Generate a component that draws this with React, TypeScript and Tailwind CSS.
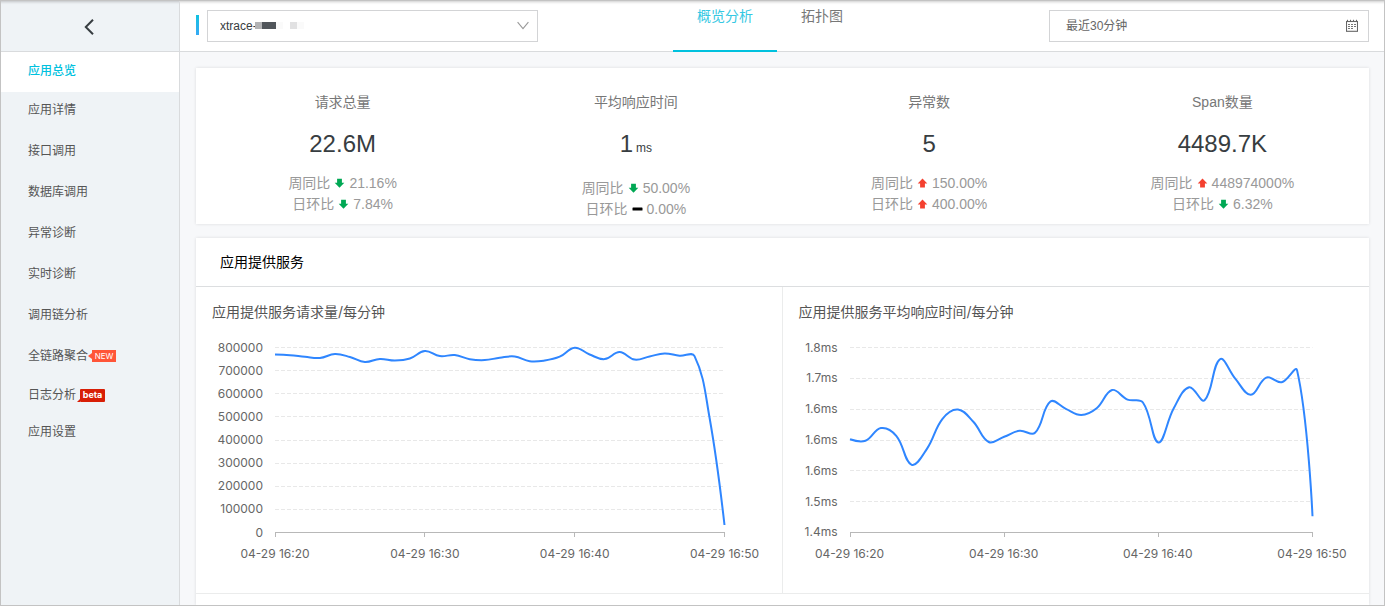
import type { ReactNode } from "react";

type Trend = "up" | "down" | "flat";

interface Stat {
  label: string;
  value: string;
  unit?: string;
  week: { trend: Trend; text: string };
  day: { trend: Trend; text: string };
}

const STATS: Stat[] = [
  { label: "请求总量", value: "22.6M", week: { trend: "down", text: "21.16%" }, day: { trend: "down", text: "7.84%" } },
  { label: "平均响应时间", value: "1", unit: "ms", week: { trend: "down", text: "50.00%" }, day: { trend: "flat", text: "0.00%" } },
  { label: "异常数", value: "5", week: { trend: "up", text: "150.00%" }, day: { trend: "up", text: "400.00%" } },
  { label: "Span数量", value: "4489.7K", week: { trend: "up", text: "448974000%" }, day: { trend: "down", text: "6.32%" } },
];

const PLOT_HEIGHT = 185;
const TIMES = ["04-29 16:20", "04-29 16:30", "04-29 16:40", "04-29 16:50"];

// Distance of each minute's sample from the top grid line, in plot units.
const REQUESTS = [
  7.5, 8.2, 9.8, 11, 7.1, 10, 15, 11.9, 13.5, 11.5, 4, 9.1, 8.1, 12.2, 13.1, 10.7, 9.5, 14.2, 13.5, 9.7, 0.7, 7.5,
  12.1, 5, 12.6, 9.5, 6.5, 8.7, 9.1, 70.5, 178,
];
const RESPONSE = [
  92.3, 93.8, 81.1, 88.8, 117.8, 101.6, 71.8, 62.5, 74.8, 95, 89.8, 83.8, 85.8, 54.5, 61.8, 68, 61.3, 43, 52.6, 55.5,
  95.500, 61.300, 40.200, 53.200, 12.200, 31.800, 47.800, 30.600, 35.200, 23.400, 169.300,
];

const SMOOTHNESS = 0.4;
const clampY = (y: number) => Math.min(Math.max(y, 0), PLOT_HEIGHT);

// Catmull-Rom style smoothing, weighted by the length of the segments at each sample.
function smoothPath(values: number[], width: number): string {
  const step = width / (values.length - 1);
  let d = `M0,${values[0]}`;
  let cx = 0;
  let cy = values[0];
  for (let i = 1; i < values.length; i++) {
    const x = i * step;
    const y = values[i];
    let inX = x;
    let inY = y;
    let outX = x;
    let outY = y;
    if (i < values.length - 1) {
      const vx = 2 * step * SMOOTHNESS;
      const vy = (values[i + 1] - values[i - 1]) * SMOOTHNESS;
      const before = Math.hypot(step, y - values[i - 1]);
      const after = Math.hypot(step, values[i + 1] - y);
      const share = before / (before + after);
      inX = x - vx * share;
      inY = clampY(y - vy * share);
      outX = x + vx * (1 - share);
      outY = clampY(y + vy * (1 - share));
    }
    d += `C${cx},${cy} ${inX},${inY} ${x},${y}`;
    cx = outX;
    cy = outY;
  }
  return d;
}

function TrendIcon({ trend }: { trend: Trend }) {
  if (trend === "flat") {
    return (
      <svg className="h-[10px] w-[11px]" viewBox="0 0 11 10" aria-hidden="true">
        <rect x="0.5" y="3.4" width="10" height="3.2" rx="0.6" fill="#000" />
      </svg>
    );
  }
  return (
    <svg className="h-[10px] w-[11px]" viewBox="-0.5 0 11 10" aria-hidden="true">
      {trend === "up" ? (
        <path d="M5 .5 9.8 5.5H7.4v4H2.600v-4H.2Z" fill="#f4402f" />
      ) : (
        <path d="M5 9.7 .2 4.7h2.4v-4h4.8v4h2.4Z" fill="#00a854" />
      )}
    </svg>
  );
}

function TrendRow({ label, trend, text }: { label: string; trend: Trend; text: string }) {
  return (
    <p className="flex h-[21px] items-center gap-1 text-sm text-[#999]">
      <span>{label}</span>
      <TrendIcon trend={trend} />
      <span>{text}</span>
    </p>
  );
}

function StatBlock({ stat }: { stat: Stat }) {
  return (
    <div className="flex flex-col items-center">
      <h3 className="text-sm leading-[21px] text-[#777]">{stat.label}</h3>
      <p className={`mt-[13px] mb-[10px] flex items-baseline gap-[3px] text-2xl leading-9 text-[#373d41] ${stat.unit ? "pb-[5px]" : ""}`}>
        {stat.value}
        {stat.unit && <span className="text-xs">{stat.unit}</span>}
      </p>
      <TrendRow label="周同比" {...stat.week} />
      <TrendRow label="日环比" {...stat.day} />
    </div>
  );
}

interface ChartProps {
  title: string;
  ticks: string[];
  values: number[];
  width: number;
  axisClass: string;
  className?: string;
}

function ChartPanel({ title, ticks, values, width, axisClass, className = "" }: ChartProps) {
  const rows = ticks.length - 1;
  return (
    <section className={`pt-[14px] pb-[30px] ${className}`}>
      <h3 className="pl-4 font-[Inter,'Noto_Sans_CJK_SC',sans-serif] text-sm leading-[21px] text-[#555]">{title}</h3>
      <div className="mt-[25px] flex pr-[57px] font-[Inter,'Liberation_Sans',sans-serif] text-xs text-[#666]">
        <div className={`flex h-[186px] shrink-0 flex-col items-end justify-between pr-3 ${axisClass}`}>
          {ticks.map((t, i) => (
            <span key={i} className="flex h-px items-center">{t}</span>
          ))}
        </div>
        <div className="min-w-0 flex-1">
          <svg
            className="block h-[190px] w-full overflow-visible"
            viewBox={`0 0 ${width} 190`}
            preserveAspectRatio="none"
            role="img"
            aria-label={title}
          >
            {ticks.slice(0, rows).map((_, i) => {
              const y = Math.round((i * PLOT_HEIGHT) / rows) + 0.5;
              return (
                <line key={i} x1="0" x2={width} y1={y} y2={y} stroke="#e8e8e8" strokeDasharray="4 2" vectorEffect="non-scaling-stroke" />
              );
            })}
            <g stroke="#b8b8b8" shapeRendering="crispEdges">
              <line x1="0" x2={width} y1="185.5" y2="185.5" vectorEffect="non-scaling-stroke" />
              {TIMES.map((t, i) => {
                const x = (i * width) / 3;
                return <line key={t} x1={x} x2={x} y1="185" y2="190" vectorEffect="non-scaling-stroke" />;
              })}
            </g>
            <path d={smoothPath(values, width)} fill="none" stroke="#2f86ff" strokeWidth="2" strokeLinejoin="bevel" vectorEffect="non-scaling-stroke" />
          </svg>
          <div className="mt-2 flex justify-between leading-[18px] whitespace-nowrap">
            {TIMES.map((t) => (
              <span key={t} className="flex w-0 justify-center">{t}</span>
            ))}
          </div>
        </div>
      </div>
    </section>
  );
}

function NavItem({ children, active = false, compact = false }: { children: ReactNode; active?: boolean; compact?: boolean }) {
  const look = active
    ? "h-10 bg-white pb-0.5 font-medium text-[#00c1de]"
    : `${compact ? "h-[37px]" : "h-[41px]"} pb-[5px] text-[#555]`;
  return (
    <li>
      <a href="#" aria-current={active ? "page" : undefined} className={`flex items-center pl-[27px] text-xs ${look}`}>
        {children}
      </a>
    </li>
  );
}

export default function App() {
  return (
    <div className="flex h-screen overflow-hidden border border-[#c3c3c3] bg-[#f7f8fa] font-['Liberation_Sans','Noto_Sans_CJK_SC',sans-serif]">
      <aside className="w-[179px] shrink-0 border-r border-[#d9dbdd] bg-[#eff3f6] shadow-[inset_0_4px_3px_-3px_rgba(0,0,0,0.2)]">
        <div className="flex h-[51px] items-center justify-center border-b border-[#d9dbdd] pr-0.5 pt-0.5">
          <button type="button" aria-label="返回" className="flex h-8 w-8 items-center justify-center">
            <svg className="h-4 w-[10px]" viewBox="0 0 10 16" fill="none" stroke="#373d41" strokeWidth="2" aria-hidden="true">
              <path d="M9 .8 1.8 8 9 15.2" />
            </svg>
          </button>
        </div>
        <nav>
          <ul>
            <NavItem active>应用总览</NavItem>
            <NavItem>应用详情</NavItem>
            <NavItem>接口调用</NavItem>
            <NavItem>数据库调用</NavItem>
            <NavItem>异常诊断</NavItem>
            <NavItem>实时诊断</NavItem>
            <NavItem>调用链分析</NavItem>
            <NavItem>
              全链路聚合
              <svg className="h-[6px] w-1" viewBox="0 0 4 6" aria-hidden="true">
                <path d="M4 0v6L0 3Z" fill="#ff5538" />
              </svg>
              <span className="flex h-3 w-6 items-center justify-center bg-[#ff5538] font-[Inter,sans-serif] text-[8px] text-white">NEW</span>
            </NavItem>
            <NavItem compact>
              日志分析
              <svg className="mt-[10px] ml-px h-[3px] w-[3px]" viewBox="0 0 3 3" aria-hidden="true">
                <path d="M3 0v3H0Z" fill="#d81e06" />
              </svg>
              <span className="flex h-[13px] w-[25px] items-center justify-center rounded-[1px] bg-[#d81e06] font-[Inter,sans-serif] text-[9px] font-bold text-white">
                beta
              </span>
            </NavItem>
            <NavItem compact>应用设置</NavItem>
          </ul>
        </nav>
      </aside>

      <div className="flex min-w-0 flex-1 flex-col">
        <header className="flex h-[51px] shrink-0 items-start border-b border-[#d9dbdd] bg-white px-[15px] shadow-[inset_0_4px_3px_-3px_rgba(0,0,0,0.2)]">
          <div className="ml-px mt-[14px] h-5 w-[3px] shrink-0 bg-linear-to-b from-[#0cc2e0] to-[#35a9f5]" />
          <div className="relative mt-[9px] ml-2 w-[331px] shrink-0">
            <select
              aria-label="应用"
              className="h-8 w-full appearance-none border border-[#d3d4d6] bg-white px-3 text-xs text-[#373d41] outline-none"
            >
              <option>xtrace-</option>
            </select>
            <div className="pointer-events-none absolute top-3 left-12 flex h-[7px]" aria-hidden="true">
              <span className="w-[7px] bg-[#b2b3b5]" />
              <span className="w-[14px] bg-[#50555a]" />
              <span className="w-[7px] bg-[#fafafa]" />
              <span className="ml-[7px] w-[7px] bg-[#e1e1e2]" />
              <span className="w-[7px] bg-[#fafafa]" />
            </div>
            <svg
              className="pointer-events-none absolute top-[11px] right-[9px] h-[9px] w-3"
              viewBox="0 0 12 9"
              fill="none"
              stroke="#999"
              strokeWidth="1.1"
              aria-hidden="true"
            >
              <path d="M.6 1.2 6 7.6 11.4 1.2" />
            </svg>
          </div>
          <nav className="ml-[135px] flex h-[51px] shrink-0 text-sm">
            <a href="#" aria-current="page" className="border-b-2 border-[#00c1de] px-6 pt-[5px] leading-[21px] text-[#35c8e3]">
              概览分析
            </a>
            <a href="#" className="px-6 pt-[5px] leading-[21px] text-[#777]">拓扑图</a>
          </nav>
          <div className="relative mt-[9px] ml-auto w-80">
            <input
              type="text"
              readOnly
              aria-label="时间范围"
              value="最近30分钟"
              className="block h-8 w-full border border-[#d3d4d6] bg-white px-4 pb-[3px] text-xs text-[#666] outline-none"
            />
            <svg
              className="pointer-events-none absolute top-[9px] right-[11px] h-[13px] w-3"
              viewBox="0 0 12 13"
              fill="none"
              stroke="#666"
              aria-hidden="true"
            >
              <rect x=".5" y="2.5" width="11" height="9.8" strokeWidth="1.1" />
              <path d="M1.500.8v2M4.500.8v2M7.500.8v2M10.500.8v2" />
              <path d="M2 5.500h8M2 7.500h8M2 9.500h5" stroke="#777" strokeDasharray="2 1" />
            </svg>
          </div>
        </header>

        <main className="flex flex-1 flex-col gap-[14px] px-[15px] pt-4">
          <section className="ml-px grid shrink-0 grid-cols-4 bg-white pt-6 pb-[5px] shadow-[0_0_3px_rgba(0,0,0,0.12)]">
            {STATS.map((s) => (
              <StatBlock key={s.label} stat={s} />
            ))}
          </section>

          <section className="ml-px flex-1 bg-white shadow-[0_0_3px_rgba(0,0,0,0.12)]">
            <h2 className="flex h-[49px] items-center border-b border-[#dcdee0] pl-6 text-sm text-black">应用提供服务</h2>
            <div className="grid grid-cols-2 border-b border-[#ebecec]">
              <ChartPanel
                title="应用提供服务请求量/每分钟"
                ticks={["800000", "700000", "600000", "500000", "400000", "300000", "200000", "100000", "0"]}
                values={REQUESTS}
                width={450}
                axisClass="w-[79px]"
                className="border-r border-[#ebecec]"
              />
              <ChartPanel
                title="应用提供服务平均响应时间/每分钟"
                ticks={["1.8ms", "1.7ms", "1.6ms", "1.6ms", "1.6ms", "1.5ms", "1.4ms"]}
                values={RESPONSE}
                width={463}
                axisClass="w-[67px]"
              />
            </div>
          </section>
        </main>
      </div>
    </div>
  );
}
